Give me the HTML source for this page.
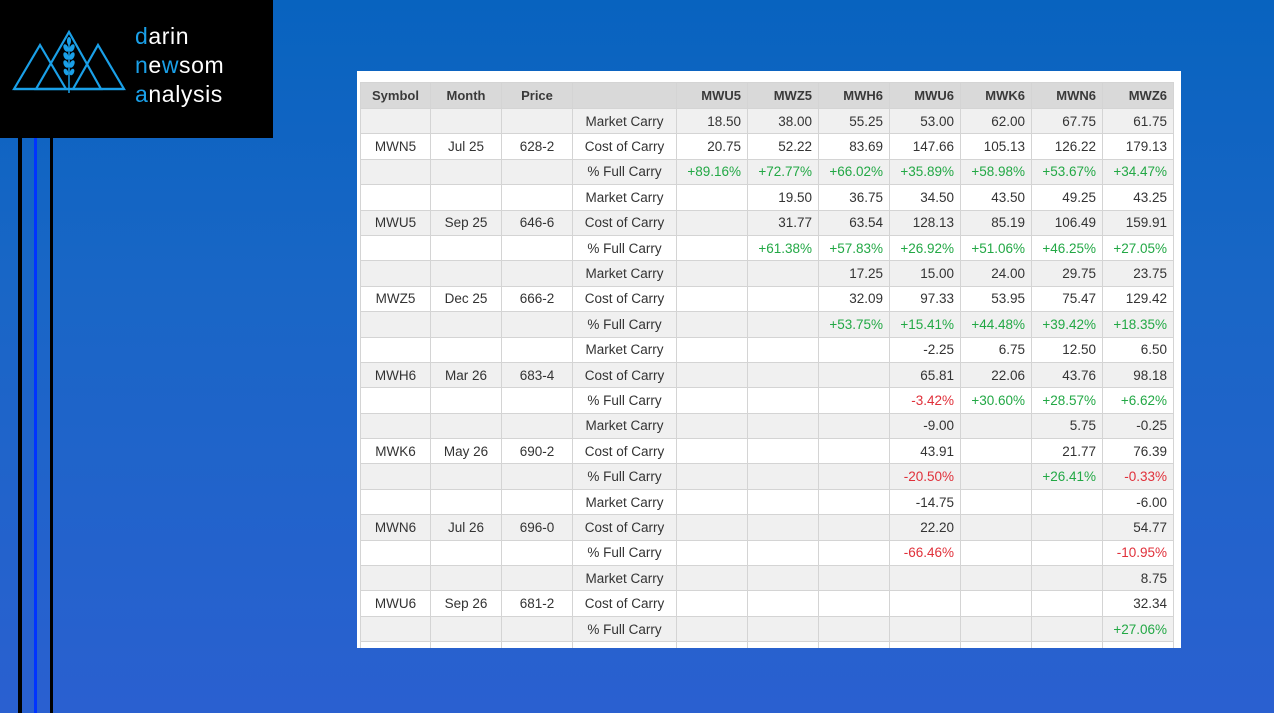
<!DOCTYPE html>
<html><head><meta charset="utf-8"><style>
*{margin:0;padding:0;box-sizing:border-box}
body{width:1274px;height:713px;overflow:hidden;position:relative;background:linear-gradient(180deg,#0863bf 0%,#1966c6 40%,#2a60d0 100%);font-family:"Liberation Sans",sans-serif}
.logo{position:absolute;left:0;top:0;width:273px;height:138px;background:#000}
.logo .t{position:absolute;left:135px;top:22px;color:#fff;font-size:23px;line-height:29px;letter-spacing:0.6px}
.logo .t b{font-weight:normal;color:#1aa0e8}
.v{position:absolute;top:138px;height:575px}
.panel{position:absolute;left:357px;top:71px;width:824px;height:577px;background:#fff;overflow:hidden}
table{position:absolute;left:3px;top:11px;border-collapse:collapse;table-layout:fixed;font-size:13.5px;color:#333}
td,th{border:1px solid #d4d4d4;height:25.4px;padding:0 6px;white-space:nowrap}
th{background:#d9d9d9;font-weight:bold;height:26px;text-align:right;color:#3a3a3a;font-size:13px}
th.c{text-align:center}
td{text-align:right}
td.c{text-align:center}
tr.g td{background:#f0f0f0}
.p{color:#22a845}.n{color:#e0303a}
</style></head><body>
<div class="logo">
<svg width="135" height="110" style="position:absolute;left:0;top:0" fill="none" stroke="#1aa0e8" stroke-width="2.2">
<polygon points="14,89 40,45 66,89"/>
<polygon points="36,89 69,32 101,89"/>
<polygon points="73,89 98,45 124,89"/>
<line x1="14" y1="89" x2="124" y2="89"/>
<line x1="69" y1="42" x2="69" y2="93" stroke-width="1.5"/>
<g fill="#1aa0e8" stroke="none">
<ellipse cx="66" cy="48" rx="2.3" ry="4" transform="rotate(-25 66 48)"/><ellipse cx="72" cy="48" rx="2.3" ry="4" transform="rotate(25 72 48)"/>
<ellipse cx="66" cy="56" rx="2.3" ry="4" transform="rotate(-25 66 56)"/><ellipse cx="72" cy="56" rx="2.3" ry="4" transform="rotate(25 72 56)"/>
<ellipse cx="66" cy="64" rx="2.3" ry="4" transform="rotate(-25 66 64)"/><ellipse cx="72" cy="64" rx="2.3" ry="4" transform="rotate(25 72 64)"/>
<ellipse cx="66" cy="72" rx="2.1" ry="3.5" transform="rotate(-25 66 72)"/><ellipse cx="72" cy="72" rx="2.1" ry="3.5" transform="rotate(25 72 72)"/>
<ellipse cx="69" cy="41" rx="2" ry="4"/>
</g></svg>
<div class="t"><b>d</b>arin<br><b>n</b>e<b>w</b>som<br><b>a</b>nalysis</div>
</div>
<div class="v" style="left:18px;width:4px;background:#000"></div>
<div class="v" style="left:34px;width:3px;background:#0033ff"></div>
<div class="v" style="left:50px;width:3px;background:#000"></div>
<div class="panel"><table>
<colgroup><col style="width:70px"><col style="width:71px"><col style="width:71px"><col style="width:104px"><col style="width:71px"><col style="width:71px"><col style="width:71px"><col style="width:71px"><col style="width:71px"><col style="width:71px"><col style="width:71px"></colgroup>
<tr><th class="c">Symbol</th><th class="c">Month</th><th class="c">Price</th><th></th><th>MWU5</th><th>MWZ5</th><th>MWH6</th><th>MWU6</th><th>MWK6</th><th>MWN6</th><th>MWZ6</th></tr>
<tr class="g"><td></td><td></td><td></td><td class="c">Market Carry</td><td>18.50</td><td>38.00</td><td>55.25</td><td>53.00</td><td>62.00</td><td>67.75</td><td>61.75</td></tr>
<tr><td class="c">MWN5</td><td class="c">Jul 25</td><td class="c">628-2</td><td class="c">Cost of Carry</td><td>20.75</td><td>52.22</td><td>83.69</td><td>147.66</td><td>105.13</td><td>126.22</td><td>179.13</td></tr>
<tr class="g"><td></td><td></td><td></td><td class="c">% Full Carry</td><td class="p">+89.16%</td><td class="p">+72.77%</td><td class="p">+66.02%</td><td class="p">+35.89%</td><td class="p">+58.98%</td><td class="p">+53.67%</td><td class="p">+34.47%</td></tr>
<tr><td></td><td></td><td></td><td class="c">Market Carry</td><td></td><td>19.50</td><td>36.75</td><td>34.50</td><td>43.50</td><td>49.25</td><td>43.25</td></tr>
<tr class="g"><td class="c">MWU5</td><td class="c">Sep 25</td><td class="c">646-6</td><td class="c">Cost of Carry</td><td></td><td>31.77</td><td>63.54</td><td>128.13</td><td>85.19</td><td>106.49</td><td>159.91</td></tr>
<tr><td></td><td></td><td></td><td class="c">% Full Carry</td><td></td><td class="p">+61.38%</td><td class="p">+57.83%</td><td class="p">+26.92%</td><td class="p">+51.06%</td><td class="p">+46.25%</td><td class="p">+27.05%</td></tr>
<tr class="g"><td></td><td></td><td></td><td class="c">Market Carry</td><td></td><td></td><td>17.25</td><td>15.00</td><td>24.00</td><td>29.75</td><td>23.75</td></tr>
<tr><td class="c">MWZ5</td><td class="c">Dec 25</td><td class="c">666-2</td><td class="c">Cost of Carry</td><td></td><td></td><td>32.09</td><td>97.33</td><td>53.95</td><td>75.47</td><td>129.42</td></tr>
<tr class="g"><td></td><td></td><td></td><td class="c">% Full Carry</td><td></td><td></td><td class="p">+53.75%</td><td class="p">+15.41%</td><td class="p">+44.48%</td><td class="p">+39.42%</td><td class="p">+18.35%</td></tr>
<tr><td></td><td></td><td></td><td class="c">Market Carry</td><td></td><td></td><td></td><td>-2.25</td><td>6.75</td><td>12.50</td><td>6.50</td></tr>
<tr class="g"><td class="c">MWH6</td><td class="c">Mar 26</td><td class="c">683-4</td><td class="c">Cost of Carry</td><td></td><td></td><td></td><td>65.81</td><td>22.06</td><td>43.76</td><td>98.18</td></tr>
<tr><td></td><td></td><td></td><td class="c">% Full Carry</td><td></td><td></td><td></td><td class="n">-3.42%</td><td class="p">+30.60%</td><td class="p">+28.57%</td><td class="p">+6.62%</td></tr>
<tr class="g"><td></td><td></td><td></td><td class="c">Market Carry</td><td></td><td></td><td></td><td>-9.00</td><td></td><td>5.75</td><td>-0.25</td></tr>
<tr><td class="c">MWK6</td><td class="c">May 26</td><td class="c">690-2</td><td class="c">Cost of Carry</td><td></td><td></td><td></td><td>43.91</td><td></td><td>21.77</td><td>76.39</td></tr>
<tr class="g"><td></td><td></td><td></td><td class="c">% Full Carry</td><td></td><td></td><td></td><td class="n">-20.50%</td><td></td><td class="p">+26.41%</td><td class="n">-0.33%</td></tr>
<tr><td></td><td></td><td></td><td class="c">Market Carry</td><td></td><td></td><td></td><td>-14.75</td><td></td><td></td><td>-6.00</td></tr>
<tr class="g"><td class="c">MWN6</td><td class="c">Jul 26</td><td class="c">696-0</td><td class="c">Cost of Carry</td><td></td><td></td><td></td><td>22.20</td><td></td><td></td><td>54.77</td></tr>
<tr><td></td><td></td><td></td><td class="c">% Full Carry</td><td></td><td></td><td></td><td class="n">-66.46%</td><td></td><td></td><td class="n">-10.95%</td></tr>
<tr class="g"><td></td><td></td><td></td><td class="c">Market Carry</td><td></td><td></td><td></td><td></td><td></td><td></td><td>8.75</td></tr>
<tr><td class="c">MWU6</td><td class="c">Sep 26</td><td class="c">681-2</td><td class="c">Cost of Carry</td><td></td><td></td><td></td><td></td><td></td><td></td><td>32.34</td></tr>
<tr class="g"><td></td><td></td><td></td><td class="c">% Full Carry</td><td></td><td></td><td></td><td></td><td></td><td></td><td class="p">+27.06%</td></tr>
<tr><td></td><td></td><td></td><td></td><td></td><td></td><td></td><td></td><td></td><td></td><td></td></tr>
</table></div>
</body></html>
